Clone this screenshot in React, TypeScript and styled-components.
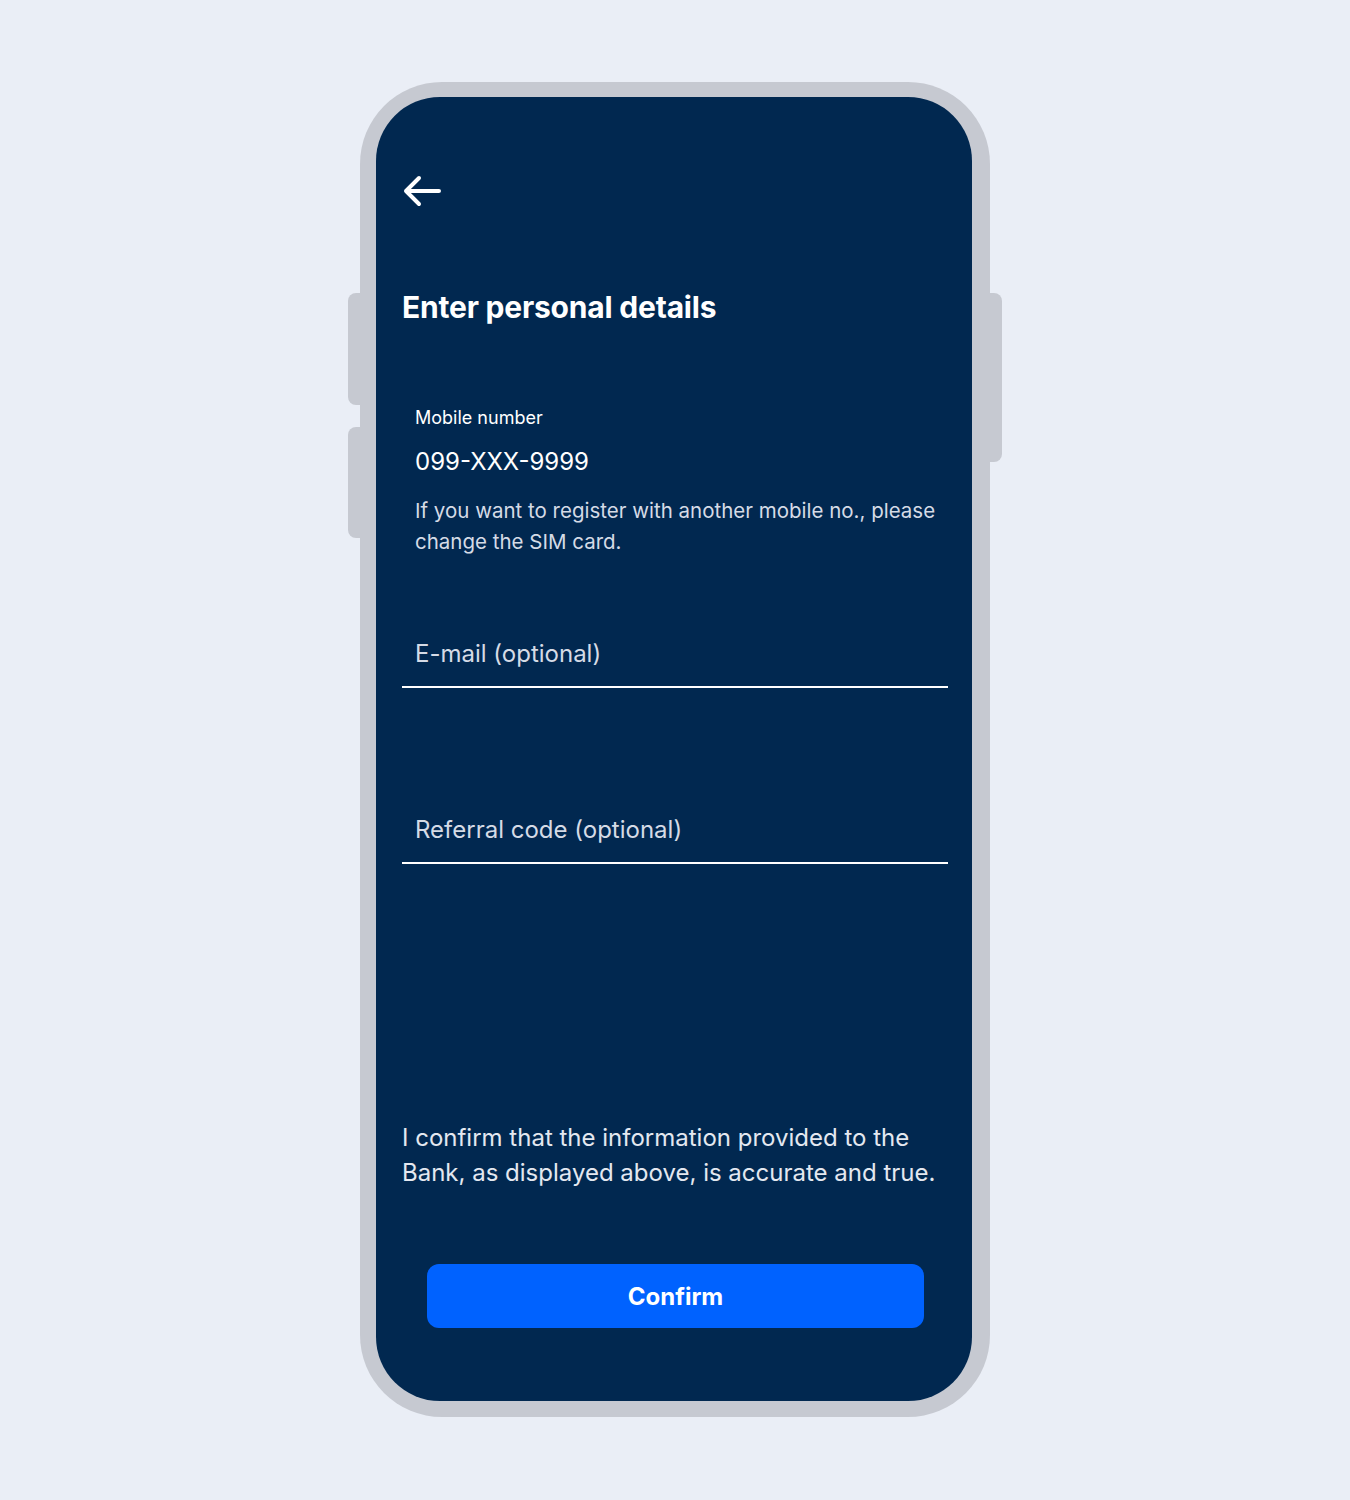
import React from "react";
import styled, { createGlobalStyle } from "styled-components";

const Global = createGlobalStyle`
  html, body { margin: 0; padding: 0; background: #eaeef6; }
  body { font-family: "Inter", "Noto Sans", sans-serif; -webkit-font-smoothing: antialiased; }
  * { box-sizing: border-box; }
`;

const Page = styled.div`
  min-height: 1500px;
  display: flex;
  justify-content: center;
  padding-top: 82px;
`;

const Phone = styled.div`
  position: relative;
  width: 630px;
  height: 1335px;
  background: #c6c9d1;
  border-radius: 82px;
  padding: 15px 18px 16px 16px;
  display: flex;
`;

const SideButton = styled.div<{ $side: "left" | "right"; $top: number; $h: number }>`
  position: absolute;
  top: ${(p) => p.$top}px;
  height: ${(p) => p.$h}px;
  width: 16px;
  background: #c6c9d1;
  ${(p) => (p.$side === "left" ? "left: -12px;" : "right: -12px;")}
  border-radius: ${(p) => (p.$side === "left" ? "8px 0 0 8px" : "0 8px 8px 0")};
`;

const Screen = styled.div`
  flex: 1;
  background: #012850;
  border-radius: 64px;
  display: flex;
  flex-direction: column;
  padding: 0 24px 0 26px;
  color: #ffffff;
  overflow: hidden;
`;

const BackButton = styled.button`
  margin-top: 77px;
  width: 40px;
  height: 34px;
  padding: 0;
  border: 0;
  background: transparent;
  display: flex;
  align-items: center;
  cursor: pointer;
`;

const Title = styled.h1`
  margin: 79px 0 0;
  font-size: 30px;
  line-height: 40px;
  font-weight: 700;
  letter-spacing: -0.2px;
  color: #ffffff;
`;

const InfoBlock = styled.div`
  margin-top: 79px;
  padding-left: 13px;
`;

const SmallLabel = styled.div`
  font-size: 18px;
  line-height: 24px;
  color: #ffffff;
`;

const Value = styled.div`
  margin-top: 17px;
  font-size: 24px;
  line-height: 30px;
  color: #ffffff;
`;

const Help = styled.p`
  margin: 18px 0 0;
  font-size: 20.5px;
  line-height: 31px;
  color: #d5dbe6;
`;

const Field = styled.div<{ $top: number }>`
  margin-top: ${(p) => p.$top}px;
  border-bottom: 2px solid #ffffff;
  padding: 0 0 16px 13px;
  font-size: 24px;
  line-height: 32px;
  color: #d5dbe6;
`;

const Spacer = styled.div`
  flex: 1;
`;

const Statement = styled.p`
  margin: 0;
  font-size: 24px;
  line-height: 35px;
  color: #e4e8f0;
`;

const ConfirmButton = styled.button`
  margin: 74px 24px 73px 25px;
  height: 64px;
  border: 0;
  border-radius: 12px;
  background: #0062ff;
  color: #ffffff;
  font-family: inherit;
  font-size: 24px;
  font-weight: 700;
  cursor: pointer;
`;

export default function App() {
  return (
    <>
      <Global />
      <Page>
        <Phone>
          <SideButton $side="left" $top={211} $h={112} />
          <SideButton $side="left" $top={345} $h={111} />
          <SideButton $side="right" $top={211} $h={169} />
          <Screen>
            <BackButton aria-label="Back">
              <svg width="40" height="34" viewBox="0 0 40 34" fill="none">
                <path d="M37 17H4M17 4L4 17L17 30" stroke="#ffffff" strokeWidth="4" strokeLinecap="round" strokeLinejoin="round" />
              </svg>
            </BackButton>
            <Title>Enter personal details</Title>
            <InfoBlock>
              <SmallLabel>Mobile number</SmallLabel>
              <Value>099-XXX-9999</Value>
              <Help>
                If you want to register with another mobile no., please change the SIM card.
              </Help>
            </InfoBlock>
            <Field $top={81}>E-mail (optional)</Field>
            <Field $top={126}>Referral code (optional)</Field>
            <Spacer />
            <Statement>
              I confirm that the information provided to the Bank, as displayed above, is accurate and true.
            </Statement>
            <ConfirmButton>Confirm</ConfirmButton>
          </Screen>
        </Phone>
      </Page>
    </>
  );
}
